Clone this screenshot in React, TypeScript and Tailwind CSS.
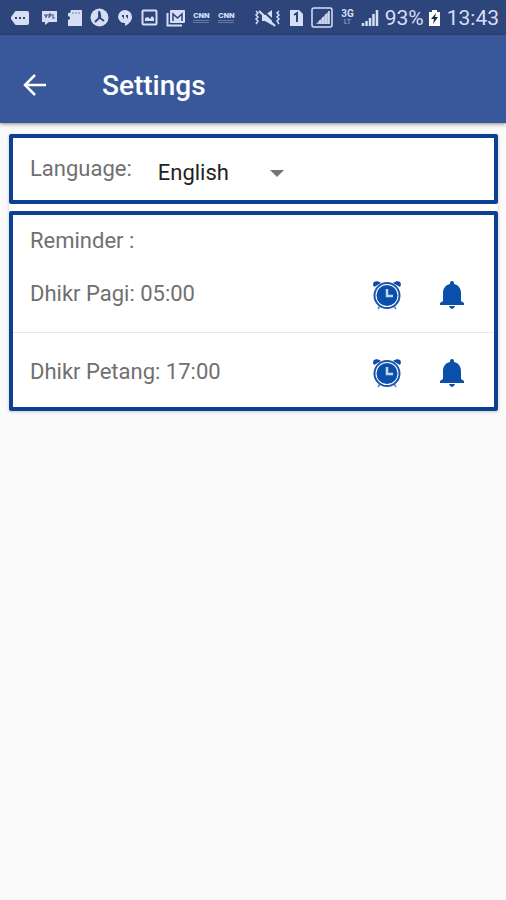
import React, { useState } from "react";

function NotificationIcons() {
  return (
    <div className="flex items-center">
      <div className="flex w-[27px]">
        <svg width="20" height="16" viewBox="0 0 20 16" aria-hidden="true">
          <path d="M6 1h11q2 0 2 2v10q0 2-2 2H6q-1 0-2-2L1 9V7l3-4q1-2 2-2z" fill="#d5def5" />
          <path d="M5 7h2v2H5zM9 7h2v2H9zM13 7h2v2h-2z" fill="#2e457b" />
        </svg>
      </div>
      <div className="flex w-[25px] justify-center">
        <svg width="17" height="16" viewBox="0 0 17 16" aria-hidden="true">
          <path d="M1 1h15v11H8l-4 3v-3H1z" fill="#d5def5" />
          <path d="M4 4v2h2V4M5 6v2M8 4v4M8 4h2v2H8M12 4v3M11 8h3" stroke="#2e457b" fill="none" />
        </svg>
      </div>
      <div className="flex w-[25px] justify-center">
        <svg width="16" height="18" viewBox="0 0 16 18" aria-hidden="true">
          <path d="M4 1h11v16H1v-6l2-1V8L1 7V4h2z" fill="#d5def5" />
          <path d="M6 3v2M9 3v2M12 3v2" stroke="#7185b1" />
        </svg>
      </div>
      <div className="flex w-[25px] justify-center">
        <svg width="19" height="19" viewBox="0 0 19 19" aria-hidden="true">
          <circle cx="9.500" cy="9.500" r="9" fill="#d5def5" />
          <path d="M9 3q2 5 1 7l4 3M9 10l-4 4M9 4v7" stroke="#2e457b" strokeWidth="1.800" fill="none" />
        </svg>
      </div>
      <div className="flex w-[25px] justify-center">
        <svg width="16" height="18" viewBox="0 0 16 18" aria-hidden="true">
          <path d="M8 1a7 7 0 0 1 7 7c0 4-3 7-7 9v-3A6.500 6.500 0 0 1 1 8a7 7 0 0 1 7-7z" fill="#d5def5" />
          <path d="M5 6h2v3l-1 1V8H5zM9 6h2v3l-1 1V8H9z" fill="#2e457b" />
        </svg>
      </div>
      <div className="flex w-[25px] justify-center">
        <svg width="17" height="17" viewBox="0 0 17 17" aria-hidden="true">
          <rect x="1.500" y="1.500" width="14" height="14" rx="1" fill="none" stroke="#d5def5" strokeWidth="2" />
          <path d="M4 12V9l3-1 2 2 2-3 2 2v3z" fill="#d5def5" />
        </svg>
      </div>
      <div className="flex w-[27px] justify-center">
        <svg width="20" height="18" viewBox="0 0 20 18" aria-hidden="true">
          <path d="M1.500 4v12.500H16" fill="none" stroke="#d5def5" strokeWidth="2" />
          <rect x="4" y="1" width="15" height="13" rx="1" fill="#d5def5" />
          <path d="M7 12V5l4.500 4L16 5v7" fill="none" stroke="#2e457b" strokeWidth="1.500" />
        </svg>
      </div>
      <div className="flex w-[25px] justify-center">
        <CnnIcon />
      </div>
      <div className="flex w-[25px] justify-center">
        <CnnIcon />
      </div>
    </div>
  );
}

function CnnIcon() {
  return (
    <span className="flex flex-col items-center text-[8px] leading-[8px] font-black text-[#d5def5]">
      CNN
      <span className="h-[3px] w-4 border-y border-[#657aa9]" />
    </span>
  );
}

function SystemIcons() {
  return (
    <div className="flex items-center text-[#d5def5]">
      <svg width="27" height="18" viewBox="0 0 27 18" fill="none" aria-hidden="true">
        <path d="M2 2l2 2-2 2 2 2-2 2 2 2-2 3M25 2l-2 2 2 2-2 2 2 2-2 2 2 3" stroke="currentColor" strokeWidth="1.500" />
        <path d="M8 6h3l7-5v15l-7-4H8z" fill="currentColor" />
        <path d="M7 0l16 15" stroke="#2e457b" strokeWidth="2" />
        <path d="M5 2l16 15" stroke="currentColor" strokeWidth="2" />
      </svg>
      <svg className="ml-2" width="15" height="18" viewBox="0 0 15 18" aria-hidden="true">
        <path d="M1 1h9l4 4v12H1z" fill="currentColor" />
        <path d="M5 6l3-2v9" stroke="#2e457b" strokeWidth="2" fill="none" />
      </svg>
      <svg className="ml-[7px]" width="22" height="21" viewBox="0 0 22 21" fill="none" aria-hidden="true">
        <rect x="1" y="1" width="20" height="19" rx="2" stroke="currentColor" strokeWidth="1.500" />
        <path d="M5 17L18 4v13z" fill="#a9b8dc" />
        <path d="M9 17v-4M12 17v-7M15 17V7M18 17V4" stroke="currentColor" strokeWidth="1.500" />
      </svg>
      <span className="ml-2 flex flex-col items-center text-[10px] leading-[10px] font-bold">
        3G
        <span className="text-[7px] leading-[7px] text-[#7f91bb]">LT</span>
      </span>
      <svg className="ml-[7px]" width="18" height="17" viewBox="0 0 18 17" aria-hidden="true">
        <path d="M2 17v-3M5.500 17v-5M9 17V9M12.500 17V5M16 17V1" stroke="currentColor" strokeWidth="2.500" />
      </svg>
      <span className="ml-[6px] text-[21px] leading-6">93%</span>
      <svg className="ml-1" width="13" height="18" viewBox="0 0 13 18" aria-hidden="true">
        <path d="M4 1h5v2h3v14H1V3h3z" fill="#ffffff" />
        <path d="M8 4L3 10h3l-1 5 5-7H7z" fill="#1e2a48" />
      </svg>
      <span className="ml-[6px] text-[21px] leading-6">13:43</span>
    </div>
  );
}

function AlarmIcon() {
  return (
    <svg width="30" height="30" viewBox="0 0 30 30" fill="none" aria-hidden="true">
      <path d="M2 7C-1 2 4-1 9 3zM28 7c3-5-2-8-7-4z" fill="#0b4aa6" />
      <path d="M8 26l-2 3M22 26l2 3" stroke="#5c86c4" strokeWidth="1.500" />
      <circle cx="15" cy="15.500" r="12.500" stroke="#1c56ab" strokeWidth="2" />
      <circle cx="15" cy="15.500" r="10.500" fill="#0b4fac" />
      <path d="M15 9v7h6" stroke="#c5d6ee" strokeWidth="2.500" />
    </svg>
  );
}

function BellIcon() {
  return (
    <svg width="26" height="30" viewBox="0 0 26 30" fill="#0b4fac" aria-hidden="true">
      <path d="M11 4V3a2 2 0 0 1 4 0v1c5 1 7 5 7 9v8l3 2v2H1v-2l3-2v-8c0-4 2-8 7-9zM10 26h6q-1 3-3 3t-3-3z" />
    </svg>
  );
}

function ReminderRow({ name, time }: { name: string; time: string }) {
  const [enabled, setEnabled] = useState(true);
  return (
    <div className="flex h-[78px] items-center pr-[29px] pl-[17px]">
      <span className="flex-1">
        {name}: {time}
      </span>
      <div className="flex gap-[37px] pt-[2px]">
        <button type="button" aria-label={`Set time for ${name}`}>
          <AlarmIcon />
        </button>
        <button
          type="button"
          aria-label={`Notify for ${name}`}
          aria-pressed={enabled}
          onClick={() => setEnabled(!enabled)}
        >
          <BellIcon />
        </button>
      </div>
    </div>
  );
}

export default function App() {
  return (
    <div className="min-h-screen bg-[#fafafa] font-[Roboto,sans-serif] text-[22px] leading-7 text-[#707070]">
      <div className="flex h-[35px] items-center justify-between bg-[#2e457b] pr-[7px] pl-[10px]">
        <NotificationIcons />
        <SystemIcons />
      </div>
      <header className="flex h-[88px] items-center bg-[#38589b] pt-3 pl-[22px] text-white shadow-[0_1px_4px_rgba(0,0,0,0.45)]">
        <button type="button" aria-label="Back">
          <svg width="26" height="24" viewBox="0 0 26 24" fill="none" stroke="currentColor" strokeWidth="2.500" aria-hidden="true">
            <path d="M24 12H3M13 2L3 12l10 10" />
          </svg>
        </button>
        <h1 className="ml-[54px] pt-[2px] text-[28px] leading-8 font-medium">Settings</h1>
      </header>
      <main className="mt-[11px] mr-2 ml-[9px] flex flex-col gap-[7px] bg-white shadow-[0_1px_3px_rgba(0,0,0,0.2)]">
        <section className="flex h-[70px] items-center rounded-[2px] border-4 border-[#0b4092] pl-[17px]">
          <label htmlFor="language">Language:</label>
          <div className="relative ml-[26px] flex items-center pt-2">
            <select id="language" defaultValue="English" className="w-[132px] appearance-none bg-transparent text-[#222222]">
              <option>English</option>
            </select>
            <svg className="pointer-events-none absolute right-[6px]" width="14" height="7" viewBox="0 0 14 7" aria-hidden="true">
              <path d="M0 0h14L7 7z" fill="#757575" />
            </svg>
          </div>
        </section>
        <section className="rounded-[2px] border-4 border-[#0b4092]">
          <h2 className="pt-3 pl-[17px]">Reminder :</h2>
          <div className="divide-y divide-[#e8e8e8] -mb-1">
            <ReminderRow name="Dhikr Pagi" time="05:00" />
            <ReminderRow name="Dhikr Petang" time="17:00" />
          </div>
        </section>
      </main>
    </div>
  );
}
